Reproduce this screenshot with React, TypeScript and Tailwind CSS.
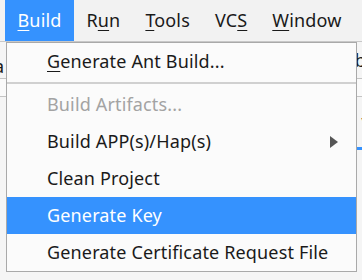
import React from "react";

const font = { fontFamily: '"Noto Sans", "Open Sans", sans-serif' };

function MenuBarItem({ label, u, active }: { label: string; u: number; active?: boolean }) {
  return (
    <div
      className={`h-full flex items-center px-[12.5px] ${active ? "bg-[#3592fe] text-white" : "text-[#1a1a1a]"}`}
    >
      <span>
        {label.slice(0, u)}
        <span className="underline underline-offset-[3px] decoration-1">{label[u]}</span>
        {label.slice(u + 1)}
      </span>
    </div>
  );
}

function Row({
  children,
  disabled,
  active,
  arrow,
}: {
  children: React.ReactNode;
  disabled?: boolean;
  active?: boolean;
  arrow?: boolean;
}) {
  return (
    <div
      className={`h-[37px] flex items-center pl-[40px] pr-[18px] ${
        active ? "bg-[#3592fe] text-white" : disabled ? "text-[#a3a3a3]" : "text-[#1a1a1a]"
      }`}
    >
      <span className="flex-1 whitespace-nowrap">{children}</span>
      {arrow && (
        <svg width="8" height="12" viewBox="0 0 8 12">
          <polygon points="0,0 8,6 0,12" fill="#555555" />
        </svg>
      )}
    </div>
  );
}

export default function App() {
  return (
    <div
      className="relative w-[362px] h-[280px] overflow-hidden bg-[#f5f5f5] text-[18px] tracking-[0.15px]"
      style={font}
    >
      <div className="h-[42px] bg-[#f2f2f2] flex pl-[5px] border-b border-[#c8c8c8]">
        <MenuBarItem label="Build" u={0} active />
        <MenuBarItem label="Run" u={1} />
        <MenuBarItem label="Tools" u={0} />
        <MenuBarItem label="VCS" u={2} />
        <MenuBarItem label="Window" u={0} />
      </div>
      {/* IDE content behind the menu */}
      <div className="flex flex-col text-[#1a1a1a]">
        <div className="h-[37px] flex items-end justify-between border-b border-[#c4c4c4] pb-[3px]">
          <span className="-ml-[6px] leading-none">a</span>
          <span className="-mr-[4px] leading-none mb-[6px]">b</span>
        </div>
        <div className="h-[18px] border-b border-[#c4c4c4] bg-[#fafafa]" />
        <div className="h-[50px] flex justify-end items-start pt-[18px]">
          <span className="-mr-[6px] leading-none">\</span>
        </div>
        <div className="h-[2px] flex justify-end">
          <div className="w-[5px] h-[3px] bg-[#3592fe]" />
        </div>
      </div>
      <div className="absolute left-[6px] top-[42px] w-[351px] bg-[#fbfbfb] border border-[#a9a9a9]">
        <Row>
          <span className="underline underline-offset-[3px] decoration-1">G</span>enerate Ant Build...
        </Row>
        <div className="py-[2px]">
          <div className="h-[2px] bg-[#d0d0d0]" />
        </div>
        <Row disabled>Build Artifacts...</Row>
        <Row arrow>Build APP(s)/Hap(s)</Row>
        <Row>Clean Project</Row>
        <Row active>Generate Key</Row>
        <Row>Generate Certificate Request File</Row>
      </div>
    </div>
  );
}
